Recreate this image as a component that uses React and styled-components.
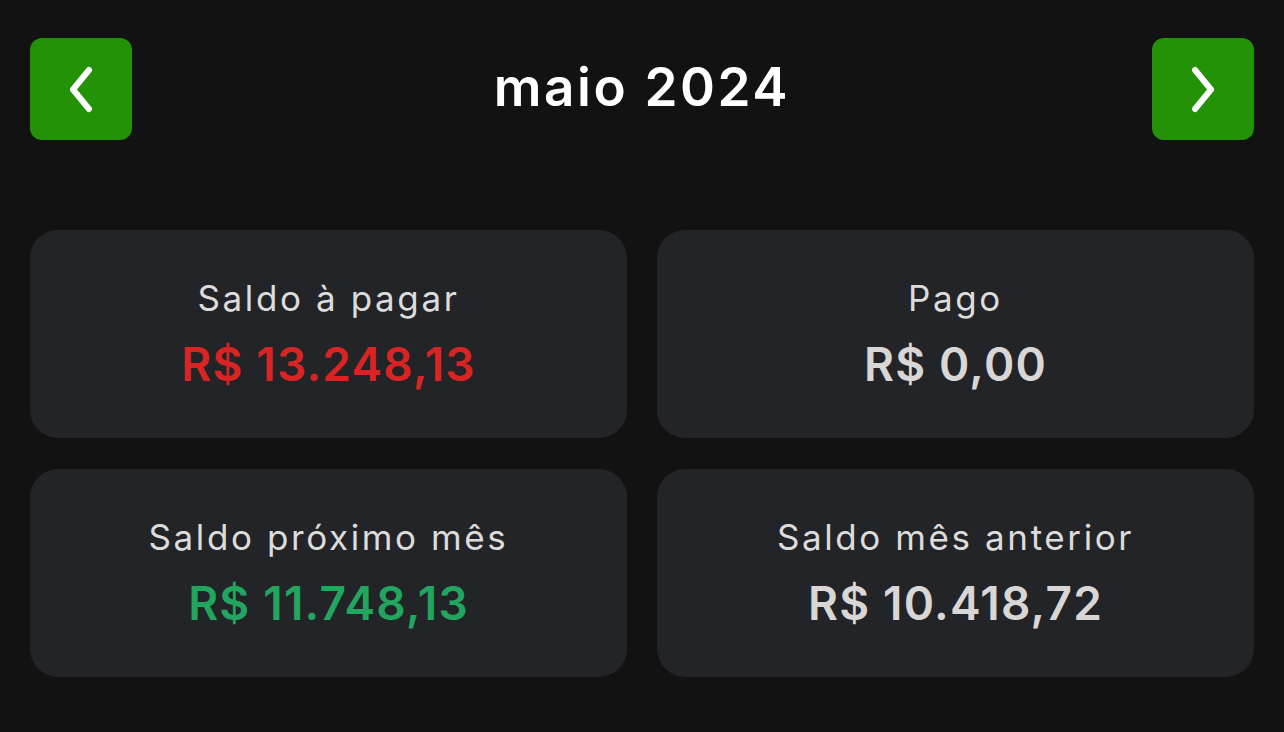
import styled, { createGlobalStyle } from "styled-components"

const Global = createGlobalStyle`
    body {
        margin : 0;
        background-color : #121212;
        font-family : "Inter", "Open Sans", sans-serif;
    }
`

const Page = styled.div`
    padding : 38px 30px;
    display : flex;
    flex-flow : column;
    gap : 90px;
`

const Header = styled.header`
    display : flex;
    justify-content : space-between;
    align-items : center;
    > h1 {
        margin : 0 0 4px;
        color : #ffffff;
        font-size : 53px;
        font-weight : 600;
        letter-spacing : 2.6px;
    }
`

const NavButton = styled.button`
    width : 102px;
    height : 102px;
    border : 0;
    border-radius : 12px;
    background-color : #239207;
    display : flex;
    align-items : center;
    justify-content : center;
    cursor : pointer;
    padding : 0;
`

const Cards = styled.div`
    display : grid;
    grid-template : 208px 208px / 1fr 1fr;
    gap : 31px 30px;
`

const Card = styled.div`
    background-color : #232428;
    border-radius : 28px;
    display : flex;
    flex-flow : column;
    align-items : center;
    justify-content : center;
    gap : 25px;
    > span.label {
        color : #dcdcdc;
        font-size : 35px;
        line-height : 1;
        letter-spacing : 2.6px;
        font-weight : 400;
    }
    > span.value {
        color : ${props => props.tone};
        font-size : 46px;
        line-height : 1;
        font-weight : 600;
        letter-spacing : 1.2px;
    }
`

function Chevron({dir}){
    const d = dir === "left" ? "M21 4 L5 23.5 L21 43" : "M5 4 L21 23.5 L5 43"
    return (
        <svg width="26" height="47" viewBox="0 0 26 47" fill="none">
            <path d={d} stroke="#ffffff" strokeWidth="6" strokeLinecap="round" strokeLinejoin="round"/>
        </svg>
    )
}

const summary = [
    { label : "Saldo à pagar", value : "R$ 13.248,13", tone : "#d92424" },
    { label : "Pago", value : "R$ 0,00", tone : "#d9d6d6" },
    { label : "Saldo próximo mês", value : "R$ 11.748,13", tone : "#22a55e" },
    { label : "Saldo mês anterior", value : "R$ 10.418,72", tone : "#d9d6d6" },
]

export default function App(){
    return (
        <>
            <Global />
            <Page>
                <Header>
                    <NavButton aria-label="Mês anterior"><Chevron dir="left"/></NavButton>
                    <h1>maio 2024</h1>
                    <NavButton aria-label="Próximo mês"><Chevron dir="right"/></NavButton>
                </Header>
                <Cards>
                    {summary.map((item) => (
                        <Card key={item.label} tone={item.tone}>
                            <span className="label">{item.label}</span>
                            <span className="value">{item.value}</span>
                        </Card>
                    ))}
                </Cards>
            </Page>
        </>
    )
}
